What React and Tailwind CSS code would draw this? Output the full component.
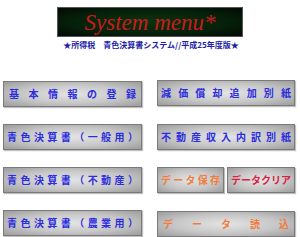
import React from 'react'

const btn =
  'h-[26px] border border-[#7a7a7a] bg-[radial-gradient(ellipse_at_center,#e4e4e4_0%,#c6c6c6_55%,#9c9c9c_100%)] shadow-[1px_1px_1px_rgba(0,0,0,0.25)] flex items-center justify-between px-[3px] font-semibold text-[10px] leading-none'

function Btn({ label, color = 'text-[#2c2ce0]', className = '' }) {
  return (
    <div className={`${btn} ${color} ${className}`}>
      {label.split('').map((c, i) => (
        <span key={i}>{c}</span>
      ))}
    </div>
  )
}

export default function App() {
  return (
    <div
      className="w-[300px] h-[237px] bg-white overflow-hidden"
      style={{ fontFamily: '"Noto Sans CJK JP", "Noto Sans", sans-serif' }}
    >
      {/* title */}
      <div className="pt-[7px] flex justify-center">
        <div className="w-[186px] h-[30px] border border-[#555] bg-[radial-gradient(ellipse_at_center,#0d3310_0%,#06200a_60%,#020a03_100%)] flex items-center justify-center">
          <span className="text-[23px] italic text-[#c81c1c] leading-none font-['Liberation_Serif',serif] mt-[1px]">
            System menu*
          </span>
        </div>
      </div>
      <div className="mt-[2px] text-center text-[8px] font-bold text-[#1c1ca6] leading-[12px] pl-[2px]">
        ★所得税　青色決算書システム//平成25年度版★
      </div>

      {/* menu */}
      <div className="mt-[30px] pl-[3px] grid grid-cols-[139px_138px] gap-x-[15px] gap-y-[17px]">
        <Btn label="基本情報の登録" className="px-[5px]" />
        <Btn label="減価償却追加別紙" className="-mt-[1px]" />
        <Btn label="青色決算書（一般用）" />
        <Btn label="不動産収入内訳別紙" />
        <Btn label="青色決算書（不動産）" />
        <div className="flex gap-[3px]">
          <Btn label="データ保存" color="text-[#f27c3c]" className="w-[68px] font-normal" />
          <Btn label="データクリア" color="text-[#d82244]" className="flex-1" />
        </div>
        <Btn label="青色決算書（農業用）" />
        <Btn label="データ読込" color="text-[#f27c3c]" className="px-[5px] font-normal mt-[1px]" />
      </div>
    </div>
  )
}
